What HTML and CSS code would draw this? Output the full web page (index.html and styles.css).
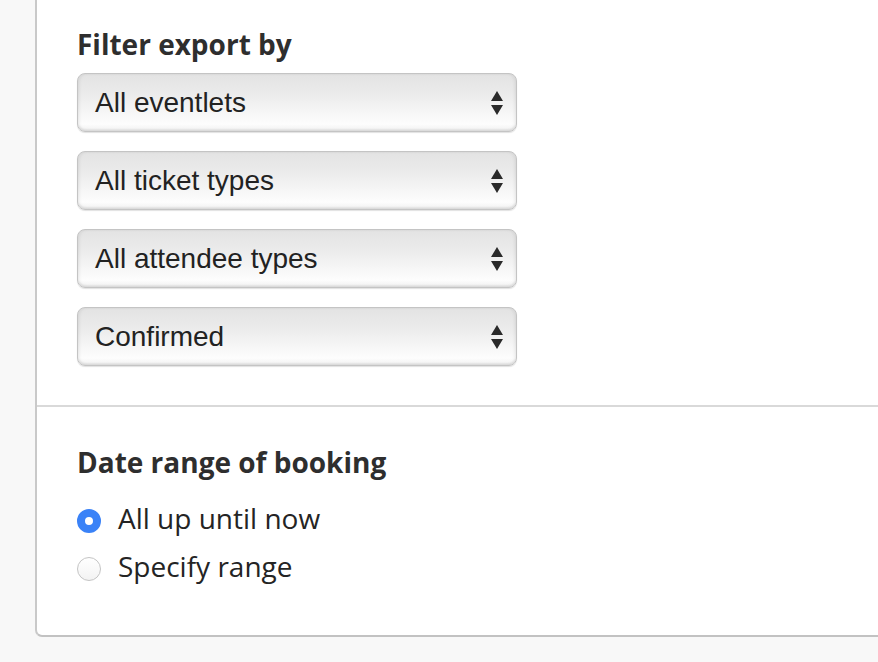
FILE: index.html
```html
<!DOCTYPE html>
<html>
<head>
<meta charset="utf-8">
<link rel="stylesheet" href="styles.css">
</head>
<body>
<div class="card">
  <section class="filters">
    <h2 class="heading">Filter export by</h2>
    <div class="select"><span>All eventlets</span><svg class="arrows" width="12" height="24" viewBox="0 0 12 24"><polygon points="0,10 6,0 12,10" /><polygon points="0,14 12,14 6,24" /></svg></div>
    <div class="select"><span>All ticket types</span><svg class="arrows" width="12" height="24" viewBox="0 0 12 24"><polygon points="0,10 6,0 12,10" /><polygon points="0,14 12,14 6,24" /></svg></div>
    <div class="select"><span>All attendee types</span><svg class="arrows" width="12" height="24" viewBox="0 0 12 24"><polygon points="0,10 6,0 12,10" /><polygon points="0,14 12,14 6,24" /></svg></div>
    <div class="select"><span>Confirmed</span><svg class="arrows" width="12" height="24" viewBox="0 0 12 24"><polygon points="0,10 6,0 12,10" /><polygon points="0,14 12,14 6,24" /></svg></div>
  </section>
  <section class="dates">
    <h2 class="heading">Date range of booking</h2>
    <label class="radio-row"><span class="radio checked"></span><span class="radio-label">All up until now</span></label>
    <label class="radio-row"><span class="radio"></span><span class="radio-label">Specify range</span></label>
  </section>
</div>
</body>
</html>
```
FILE: styles.css
```css
html, body {
  margin: 0;
  padding: 0;
  background: #f8f8f8;
  overflow: hidden;
  height: 662px;
}

.card {
  margin-left: 35px;
  margin-right: -20px;
  background: #ffffff;
  border-left: 2px solid #c9c9c9;
  border-bottom: 2px solid #c2c2c2;
  border-bottom-left-radius: 7px;
  font-family: "Open Sans", "Noto Sans", sans-serif;
  color: #2a2a2a;
}

.heading {
  margin: 0;
  font-size: 28px;
  line-height: 32px;
  font-weight: 700;
  color: #2e2e2e;
}

.filters {
  padding: 28px 0 39px 40px;
  border-bottom: 2px solid #d9d9d9;
}

.filters .heading {
  margin-bottom: 13px;
}

.select {
  box-sizing: border-box;
  width: 440px;
  height: 59px;
  margin-bottom: 19px;
  display: flex;
  align-items: center;
  justify-content: space-between;
  padding: 0 13px 0 17px;
  border: 1px solid #c4c4c4;
  border-radius: 8px;
  background: linear-gradient(#e3e3e3 0%, #ebebeb 35%, #f7f7f7 70%, #fdfdfd 88%, #f0f0f0 100%);
  box-shadow: inset 0 -2px 2px rgba(0, 0, 0, 0.06), inset 2px 0 3px rgba(0, 0, 0, 0.05), inset -2px 0 3px rgba(0, 0, 0, 0.05), 0 1px 1px rgba(0, 0, 0, 0.12);
  font-family: "Liberation Sans", Arial, sans-serif;
  font-size: 28px;
  color: #222222;
}

.select:last-child {
  margin-bottom: 0;
}

.arrows {
  fill: #2a2a2a;
  flex: none;
}

.dates {
  padding: 39px 0 43px 40px;
}

.dates .heading {
  margin-bottom: 18px;
}

.radio-row {
  display: flex;
  align-items: center;
  height: 48px;
}

.radio {
  box-sizing: border-box;
  width: 24px;
  height: 24px;
  margin-top: 2px;
  border-radius: 50%;
  border: 1px solid #c4c4c4;
  background: linear-gradient(#ffffff, #f3f3f3);
  flex: none;
}

.radio.checked {
  border: 8px solid #3a82f7;
  background: #ffffff;
}

.radio-label {
  margin-left: 17px;
  margin-bottom: 4px;
  font-size: 28px;
  line-height: 44px;
  color: #242424;
}
```
